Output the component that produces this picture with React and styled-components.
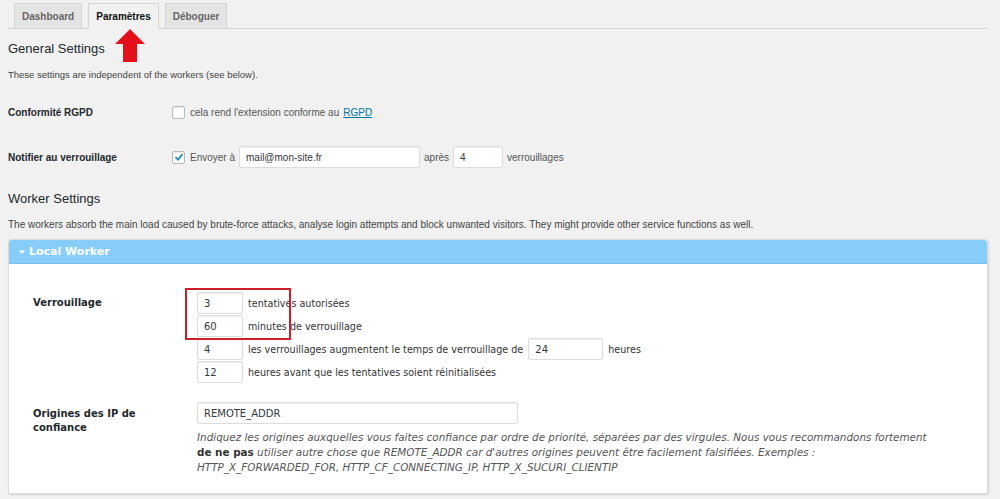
import React from 'react'
import styled, { createGlobalStyle } from 'styled-components'

const GlobalStyle = createGlobalStyle`
    html, body {
        margin: 0;
        padding: 0;
        background: #f1f1f1;
    }
    body {
        font-family: 'Liberation Sans', Arial, sans-serif;
        color: #23282d;
    }
`

const Page = styled.div`
    padding: 3px 12px 0 8px;
    width: 980px;
    height: 496px;
    overflow: hidden;
    position: relative;
`

const TabNav = styled.div`
    display: flex;
    gap: 6px;
    padding-left: 6px;
    border-bottom: 1px solid #d4d4d4;
    height: 25px;
`

const Tab = styled.div`
    height: 24px;
    padding: 0 7px;
    display: flex;
    align-items: center;
    font-size: 10px;
    font-weight: 700;
    color: ${props => (props.active ? '#111' : '#666')};
    background: ${props => (props.active ? '#f1f1f1' : '#e4e4e4')};
    border: 1px solid #d4d4d4;
    border-bottom-color: ${props => (props.active ? '#f1f1f1' : '#d4d4d4')};
    margin-bottom: -1px;
`

const Arrow = styled.svg`
    position: absolute;
    left: 114px;
    top: 28px;
`

const Heading = styled.h2`
    margin: ${props => props.top}px 0 0;
    font-size: 13px;
    line-height: 18px;
    font-weight: 400;
    color: #23282d;
`

const Desc = styled.p`
    margin: ${props => props.top}px 0 0;
    font-size: ${props => props.size || 9}px;
    line-height: 12px;
    color: #444;
`

const FormRow = styled.div`
    display: flex;
    align-items: center;
    margin-top: ${props => props.top}px;
    height: 22px;
`

const Label = styled.div`
    width: 164px;
    flex-shrink: 0;
    font-size: 10px;
    font-weight: 700;
    color: #23282d;
`

const Field = styled.div`
    display: flex;
    align-items: center;
    gap: 4px;
    font-size: 10px;
    color: #555;
`

const Check = styled.span`
    width: 11px;
    height: 11px;
    border: 1px solid #b4b9be;
    border-radius: 2px;
    background: #fff;
    box-shadow: inset 0 1px 2px rgba(0, 0, 0, 0.1);
    display: inline-flex;
    align-items: center;
    justify-content: center;
    margin-right: 1px;
`

const Link = styled.a`
    color: #0073aa;
    text-decoration: underline;
`

const Input = styled.div`
    box-sizing: border-box;
    width: ${props => props.w}px;
    height: 22px;
    background: #fff;
    border: 1px solid #ddd;
    border-radius: 2px;
    box-shadow: inset 0 1px 2px rgba(0, 0, 0, 0.07);
    padding: 0 6px;
    display: flex;
    align-items: center;
    font-size: 10px;
    color: #32373c;
    font-style: normal;
`

const Panel = styled.div`
    margin-top: 8px;
    background: #fff;
    border: 1px solid #dcdcdc;
    border-radius: 3px 3px 0 0;
    box-shadow: 1px 1px 2px rgba(0, 0, 0, 0.12);
    height: 253px;
`

const PanelHeader = styled.div`
    height: 23px;
    background: #87cdf9;
    border-bottom: 1px solid #7dbfe8;
    border-radius: 3px 3px 0 0;
    display: flex;
    align-items: center;
    padding-left: 10px;
    gap: 4px;
    color: #fff;
    font-size: 11px;
    font-weight: 700;
    font-family: 'DejaVu Sans', Verdana, sans-serif;
`

const PanelBody = styled.div`
    padding: 28px 24px 0;
    font-family: 'DejaVu Sans', Verdana, sans-serif;
`

const Section = styled.div`
    display: flex;
    margin-top: ${props => props.top || 0}px;
`

const PanelLabel = styled.div`
    width: 164px;
    flex-shrink: 0;
    font-size: 10px;
    font-weight: 700;
    line-height: 14px;
    padding-top: ${props => props.pad || 0}px;
    color: #23282d;
    div {
        width: 120px;
    }
`

const Stack = styled.div`
    display: flex;
    flex-direction: column;
    gap: 1px;
    position: relative;
`

const Line = styled.div`
    display: flex;
    align-items: center;
    gap: 5px;
    font-size: 9.6px;
    color: #333;
`

const Highlight = styled.div`
    position: absolute;
    left: -12px;
    top: -4px;
    width: 102px;
    height: 48px;
    border: 2px solid #cd1f2c;
`

const Help = styled.div`
    margin-top: 6px;
    width: 745px;
    font-size: 10.4px;
    line-height: 15px;
    font-style: italic;
    color: #555;
    b {
        font-style: normal;
        font-weight: 700;
        color: #333;
    }
`

const lockRows = [
    { value: '3', text: 'tentatives autorisées' },
    { value: '60', text: 'minutes de verrouillage' },
    { value: '4', text: 'les verrouillages augmentent le temps de verrouillage de', extra: '24', after: 'heures' },
    { value: '12', text: 'heures avant que les tentatives soient réinitialisées' }
]

const App = () => (
    <Page>
        <GlobalStyle />
        <TabNav>
            <Tab>Dashboard</Tab>
            <Tab active>Paramètres</Tab>
            <Tab>Déboguer</Tab>
        </TabNav>
        <Arrow width="32" height="36" viewBox="0 0 32 36">
            <polygon points="16,1 31,16 23,16 23,34 9,34 9,16 1,16" fill="#e3101b" />
        </Arrow>

        <Heading top={11}>General Settings</Heading>
        <Desc top={11} size={9.5}>These settings are independent of the workers (see below).</Desc>

        <FormRow top={20}>
            <Label>Conformité RGPD</Label>
            <Field>
                <Check />
                cela rend l'extension conforme au <Link>RGPD</Link>
            </Field>
        </FormRow>
        <FormRow top={23}>
            <Label>Notifier au verrouillage</Label>
            <Field>
                <Check>
                    <svg width="10" height="10" viewBox="0 0 10 10">
                        <path d="M1.5 5.2 L4 7.6 L8.6 2" stroke="#1e8cbe" strokeWidth="1.8" fill="none" />
                    </svg>
                </Check>
                Envoyer à
                <Input w={181}>mail@mon-site.fr</Input>
                après
                <Input w={50}>4</Input>
                verrouillages
            </Field>
        </FormRow>

        <Heading top={22}>Worker Settings</Heading>
        <Desc top={11} size={10}>
            The workers absorb the main load caused by brute-force attacks, analyse login attempts and block unwanted visitors. They might provide other service functions as well.
        </Desc>

        <Panel>
            <PanelHeader>
                <svg width="6" height="6" viewBox="0 0 6 6">
                    <polygon points="0,1.5 6,1.5 3,5" fill="#fff" />
                </svg>
                Local Worker
            </PanelHeader>
            <PanelBody>
                <Section>
                    <PanelLabel pad={4}>Verrouillage</PanelLabel>
                    <Stack>
                        <Highlight />
                        {lockRows.map(row => (
                            <Line key={row.value}>
                                <Input w={46}>{row.value}</Input>
                                {row.text}
                                {row.extra && <Input w={75}>{row.extra}</Input>}
                                {row.after}
                            </Line>
                        ))}
                    </Stack>
                </Section>
                <Section top={19}>
                    <PanelLabel pad={5}>
                        <div>Origines des IP de confiance</div>
                    </PanelLabel>
                    <div>
                        <Input w={321}>REMOTE_ADDR</Input>
                        <Help>
                            Indiquez les origines auxquelles vous faites confiance par ordre de priorité, séparées par des virgules. Nous vous recommandons fortement <b>de ne pas</b> utiliser autre chose que REMOTE_ADDR car d'autres origines peuvent être facilement falsifiées. Exemples : HTTP_X_FORWARDED_FOR, HTTP_CF_CONNECTING_IP, HTTP_X_SUCURI_CLIENTIP
                        </Help>
                    </div>
                </Section>
            </PanelBody>
        </Panel>
    </Page>
)

export default App
